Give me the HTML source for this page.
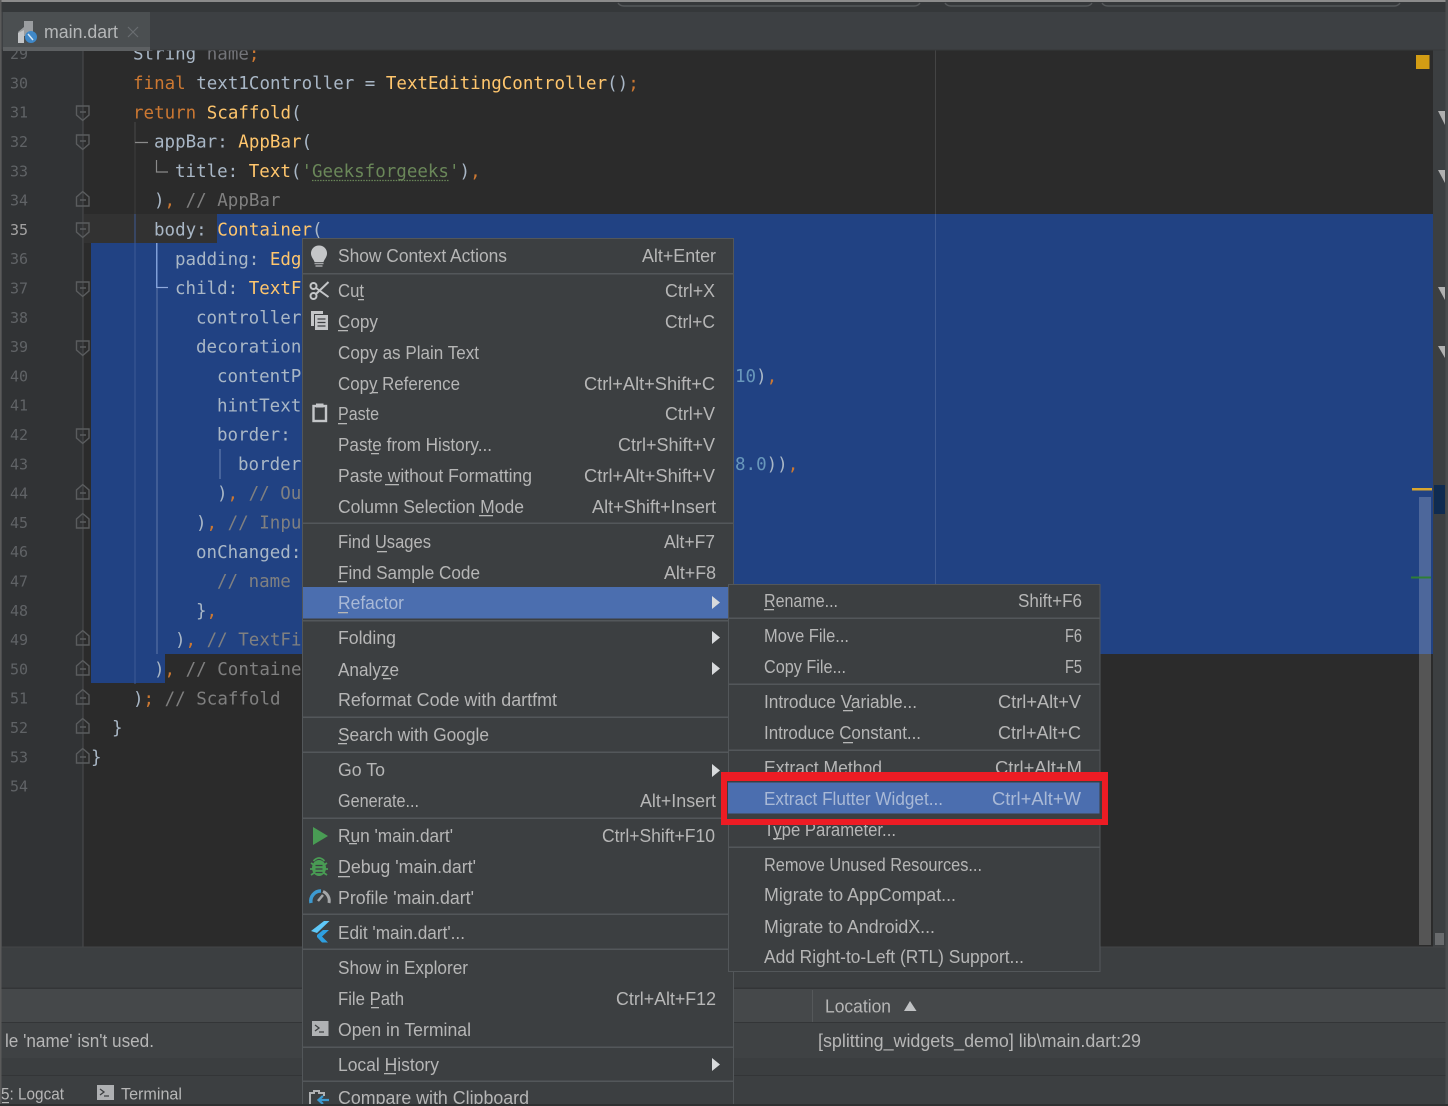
<!DOCTYPE html>
<html lang="en"><head><meta charset="utf-8"><title>main.dart</title>
<style>
html,body{margin:0;padding:0;background:#3c3f41;width:1448px;height:1106px;overflow:hidden}
svg{display:block;filter:blur(.35px)}
text{white-space:pre}
.c{font-family:"DejaVu Sans Mono","Liberation Mono",monospace;font-size:17.5px;fill:#a9b7c6}
.n{font-family:"DejaVu Sans Mono","Liberation Mono",monospace;font-size:15px;fill:#606366}
.m{font-family:"Liberation Sans",sans-serif;font-size:18px;fill:#b6b6b6}
.h{fill:#a9b9d6}
.k{fill:#cc7832}.y{fill:#ffc66d}.s{fill:#6a8759}.g{fill:#808080}.b{fill:#6897bb}.d{fill:#74757a}
.f{fill:none;stroke:#5a5c5e;stroke-width:1.4}
.u{fill:#b6b6b6}
.a{fill:#c4c6c8}
</style></head><body>
<svg width="1448" height="1106" viewBox="0 0 1448 1106" xmlns="http://www.w3.org/2000/svg">
<!-- editor background -->
<rect x="0" y="0" width="1448" height="1106" fill="#3c3f41"/>
<rect x="2" y="50" width="81" height="897" fill="#313335"/>
<rect x="83" y="50" width="1350" height="897" fill="#2b2b2b"/>
<rect x="1433" y="50" width="13" height="897" fill="#3c3f41"/>
<!-- current line + selection -->
<rect x="84" y="214" width="133" height="29" fill="#323232"/>
<rect x="217" y="214" width="1216" height="29.5" fill="#214283"/>
<rect x="91" y="243" width="1342" height="411" fill="#214283"/>
<rect x="91" y="654" width="74" height="29" fill="#214283"/>
<!-- gutter line + margin -->
<rect x="82.5" y="50" width="1" height="897" fill="#4c4e50"/>
<rect x="935" y="50" width="1" height="164" fill="#444"/>
<rect x="935" y="214" width="1" height="440" fill="#3d5a94"/>
<rect x="935" y="654" width="1" height="293" fill="#444"/>
<!-- indent guides -->
<rect x="134.5" y="122" width="1" height="21" fill="#4a4a4a"/>
<rect x="134.5" y="143" width="1" height="71" fill="#3e3e3e"/>
<rect x="134.5" y="214" width="1" height="470" fill="#3d5a94"/>
<path d="M135 142.500H148M156.500 160V172H168" fill="none" stroke="#8a8a8a" stroke-width="1.200"/>
<rect x="156" y="243" width="1.500" height="45" fill="#7f9fd8"/>
<path d="M157 287.500H168" fill="none" stroke="#8fa9dc" stroke-width="1.200"/>
<rect x="156.500" y="288" width="1" height="366" fill="#5f78a8"/>
<rect x="219.500" y="449" width="1" height="30" fill="#6d86b6"/>
<!-- line numbers -->
<g transform="translate(0 -.6)">
<text class="n" x="10" y="59.700">29</text><text class="n" x="10" y="89">30</text><text class="n" x="10" y="118.300">31</text><text class="n" x="10" y="147.600">32</text><text class="n" x="10" y="176.900">33</text><text class="n" x="10" y="206.200">34</text><text class="n" x="10" y="235.500" style="fill:#a4a3a3">35</text><text class="n" x="10" y="264.800">36</text><text class="n" x="10" y="294.100">37</text><text class="n" x="10" y="323.400">38</text><text class="n" x="10" y="352.700">39</text><text class="n" x="10" y="382">40</text><text class="n" x="10" y="411.300">41</text><text class="n" x="10" y="440.600">42</text><text class="n" x="10" y="469.900">43</text><text class="n" x="10" y="499.200">44</text><text class="n" x="10" y="528.500">45</text><text class="n" x="10" y="557.800">46</text><text class="n" x="10" y="587.100">47</text><text class="n" x="10" y="616.400">48</text><text class="n" x="10" y="645.700">49</text><text class="n" x="10" y="675">50</text><text class="n" x="10" y="704.300">51</text><text class="n" x="10" y="733.600">52</text><text class="n" x="10" y="762.900">53</text><text class="n" x="10" y="792.200">54</text>
</g>
<!-- fold markers -->
<g class="f">
<path d="M76.500 106H89V115L82.750 120.500L76.500 115ZM80 112H86"/>
<path d="M76.500 135H89V144L82.750 149.500L76.500 144ZM80 141H86"/>
<path d="M76.500 223H89V232L82.750 237.500L76.500 232ZM80 229H86"/>
<path d="M76.500 282H89V291L82.750 296.500L76.500 291ZM80 288H86"/>
<path d="M76.500 341H89V350L82.750 355.500L76.500 350ZM80 347H86"/>
<path d="M76.500 429H89V438L82.750 443.500L76.500 438ZM80 435H86"/>
<path d="M76.500 206H89V197L82.750 191.500L76.500 197ZM80 200H86"/>
<path d="M76.500 499H89V490L82.750 484.500L76.500 490ZM80 493H86"/>
<path d="M76.500 528H89V519L82.750 513.500L76.500 519ZM80 522H86"/>
<path d="M76.500 645H89V636L82.750 630.500L76.500 636ZM80 639H86"/>
<path d="M76.500 675H89V666L82.750 660.500L76.500 666ZM80 669H86"/>
<path d="M76.500 704H89V695L82.750 689.500L76.500 695ZM80 698H86"/>
<path d="M76.500 733H89V724L82.750 718.500L76.500 724ZM80 727H86"/>
<path d="M76.500 763H89V754L82.750 748.500L76.500 754ZM80 757H86"/>
</g>
<!-- code -->
<text class="c" x="133" y="59.700">String <tspan class="d">name</tspan><tspan class="k">;</tspan></text>
<text class="c" x="133" y="89"><tspan class="k">final</tspan> text1Controller = <tspan class="y">TextEditingController</tspan>()<tspan class="k">;</tspan></text>
<text class="c" x="133" y="118.300"><tspan class="k">return</tspan> <tspan class="y">Scaffold</tspan>(</text>
<text class="c" x="154" y="147.600">appBar: <tspan class="y">AppBar</tspan>(</text>
<text class="c" x="175" y="176.900">title: <tspan class="y">Text</tspan>(<tspan class="s">'Geeksforgeeks'</tspan>)<tspan class="k">,</tspan></text>
<path d="M312 180.500H449" stroke="#6a8759" stroke-width="1.300" stroke-dasharray="1.500 1.200"/>
<text class="c" x="154" y="206.200">)<tspan class="k">,</tspan> <tspan class="g">// AppBar</tspan></text>
<text class="c" x="154" y="235.500">body: <tspan class="y">Container</tspan>(</text>
<text class="c" x="175" y="264.800">padding: <tspan class="y">Edg</tspan></text>
<text class="c" x="175" y="294.100">child: <tspan class="y">TextF</tspan></text>
<text class="c" x="196" y="323.400">controller</text>
<text class="c" x="196" y="352.700">decoration</text>
<text class="c" x="217" y="382">contentP</text>
<text class="c" x="217" y="411.300">hintText</text>
<text class="c" x="217" y="440.600">border:</text>
<text class="c" x="238" y="469.900">border</text>
<text class="c" x="217" y="499.200">)<tspan class="k">,</tspan> <tspan class="g">// Ou</tspan></text>
<text class="c" x="196" y="528.500">)<tspan class="k">,</tspan> <tspan class="g">// Inpu</tspan></text>
<text class="c" x="196" y="557.800">onChanged:</text>
<text class="c g" x="217" y="587.100">// name</text>
<text class="c" x="196" y="616.400">}<tspan class="k">,</tspan></text>
<text class="c" x="175" y="645.700">)<tspan class="k">,</tspan> <tspan class="g">// TextFi</tspan></text>
<text class="c" x="154" y="675">)<tspan class="k">,</tspan> <tspan class="g">// Containe</tspan></text>
<text class="c" x="133" y="704.300">)<tspan class="k">;</tspan> <tspan class="g">// Scaffold</tspan></text>
<text class="c" x="112" y="733.600">}</text>
<text class="c" x="91" y="762.900">}</text>
<text class="c" x="735" y="382"><tspan class="b">10</tspan>)<tspan class="k">,</tspan></text>
<text class="c" x="735" y="469.900"><tspan class="b">8.0</tspan>))<tspan class="k">,</tspan></text>
<!-- right markers -->
<rect x="1416" y="55" width="13.500" height="14" fill="#d39d14"/>
<path d="M1438 111H1445V125ZM1438 170H1445V183ZM1438 287H1445V300ZM1438 346H1445V358Z" fill="#b0b0b0"/>
<rect x="1419" y="497" width="12" height="448" fill="#fff" fill-opacity=".2"/>
<rect x="1412" y="488" width="20" height="2.500" fill="#d9a62e"/>
<rect x="1411" y="576.500" width="20" height="2" fill="#2f7f34"/>
<rect x="1434" y="485" width="11" height="29" fill="#0f2b50"/>
<rect x="1435" y="933" width="9" height="12" fill="#696b6d"/>
<!-- top bars -->
<rect x="0" y="0" width="1448" height="12" fill="#35383a"/>
<rect x="0" y="0" width="1448" height="2" fill="#8b8b8b"/>
<path d="M618 3Q620 6 624 6H914Q918 6 920 3M945 3Q947 6 951 6H1086Q1090 6 1092 3M1102 3Q1104 6 1108 6H1394Q1398 6 1400 3" fill="none" stroke="#55585a" stroke-width="1.500"/>
<rect x="0" y="12" width="1448" height="38" fill="#3d4043"/>
<rect x="0" y="49.500" width="1448" height="1" fill="#36383a"/>
<rect x="3" y="12" width="147" height="39" fill="#4b4f51"/>
<rect x="3" y="47" width="147" height="4" fill="#5d6062"/>
<path d="M18 32L24 27V21H33V36H20Z" fill="#9a9da0"/>
<path d="M18 43V33L24 30V43Z" fill="#c2c4c6"/>
<circle cx="31" cy="37" r="6" fill="#3f88c8"/>
<path d="M28 34L33 40" stroke="#d5e6f5" stroke-width="1.500"/>
<text class="m" x="44" y="38" textLength="74" lengthAdjust="spacingAndGlyphs" style="fill:#b5b7b8">main.dart</text>
<path d="M128 27L138 37M138 27L128 37" stroke="#6a6d70" stroke-width="1.200"/>
<!-- bottom panels -->
<rect x="0" y="947" width="1448" height="41" fill="#3c3f41"/>
<rect x="0" y="946.500" width="1448" height="1" fill="#434547"/>
<rect x="0" y="987.500" width="1448" height="1.500" fill="#333537"/>
<rect x="0" y="989" width="1448" height="33" fill="#45484a"/>
<rect x="0" y="1022" width="1448" height="1" fill="#333537"/>
<rect x="0" y="1023" width="1448" height="35" fill="#3f4244"/>
<rect x="0" y="1058" width="1448" height="17" fill="#3b3e40"/>
<rect x="0" y="1075" width="1448" height="1" fill="#333537"/>
<rect x="0" y="1076" width="1448" height="28" fill="#3c3f41"/>
<rect x="812" y="990" width="1" height="32" fill="#55585a"/>
<text class="m" x="825" y="1012.500" textLength="66" lengthAdjust="spacingAndGlyphs">Location</text>
<path d="M904 1011L910 1001L916.500 1011Z" fill="#c0c2c4"/>
<text class="m" x="818" y="1047" textLength="323" lengthAdjust="spacingAndGlyphs">[splitting_widgets_demo] lib\main.dart:29</text>
<text class="m" x="5" y="1047" textLength="149" lengthAdjust="spacingAndGlyphs">le 'name' isn't used.</text>
<text class="m" x="1" y="1099.500" textLength="63" lengthAdjust="spacingAndGlyphs" style="font-size:17px">5: Logcat</text>
<rect x="2" y="1102" width="7" height="1.200" fill="#b6b6b6"/>
<rect x="97" y="1085" width="17" height="15" fill="#aeb0b2"/>
<path d="M100 1089L104 1092L100 1095M104 1096H109" fill="none" stroke="#3c3f41" stroke-width="1.300"/>
<text class="m" x="121" y="1099.500" textLength="61" lengthAdjust="spacingAndGlyphs" style="font-size:17px">Terminal</text>
<!-- main menu -->
<rect x="302.500" y="238.500" width="431" height="870" fill="#3c3f41" stroke="#53575a"/>
<g fill="#53575a">
<rect x="303" y="273" width="430" height="1.500"/><rect x="303" y="522.500" width="430" height="1.500"/><rect x="303" y="620" width="430" height="1.500"/><rect x="303" y="716.500" width="430" height="1.500"/><rect x="303" y="751.500" width="430" height="1.500"/><rect x="303" y="817.500" width="430" height="1.500"/><rect x="303" y="913.500" width="430" height="1.500"/><rect x="303" y="948.500" width="430" height="1.500"/><rect x="303" y="1046.500" width="430" height="1.500"/><rect x="303" y="1080.500" width="430" height="1.500"/>
</g>
<rect x="303" y="587" width="425" height="31.500" fill="#4b6eaf"/>
<g>
<text class="m" x="338" y="262" textLength="169" lengthAdjust="spacingAndGlyphs">Show Context Actions</text><text class="m" x="642" y="262" textLength="74" lengthAdjust="spacingAndGlyphs">Alt+Enter</text>
<text class="m" x="338" y="297" textLength="26" lengthAdjust="spacingAndGlyphs">Cut</text><text class="m" x="665" y="297" textLength="50" lengthAdjust="spacingAndGlyphs">Ctrl+X</text>
<text class="m" x="338" y="328" textLength="40" lengthAdjust="spacingAndGlyphs">Copy</text><text class="m" x="665" y="328" textLength="50" lengthAdjust="spacingAndGlyphs">Ctrl+C</text>
<text class="m" x="338" y="359" textLength="141" lengthAdjust="spacingAndGlyphs">Copy as Plain Text</text>
<text class="m" x="338" y="390" textLength="122" lengthAdjust="spacingAndGlyphs">Copy Reference</text><text class="m" x="584" y="390" textLength="131" lengthAdjust="spacingAndGlyphs">Ctrl+Alt+Shift+C</text>
<text class="m" x="338" y="420" textLength="41" lengthAdjust="spacingAndGlyphs">Paste</text><text class="m" x="665" y="420" textLength="50" lengthAdjust="spacingAndGlyphs">Ctrl+V</text>
<text class="m" x="338" y="451" textLength="154" lengthAdjust="spacingAndGlyphs">Paste from History...</text><text class="m" x="618" y="451" textLength="97" lengthAdjust="spacingAndGlyphs">Ctrl+Shift+V</text>
<text class="m" x="338" y="482" textLength="194" lengthAdjust="spacingAndGlyphs">Paste without Formatting</text><text class="m" x="584" y="482" textLength="131" lengthAdjust="spacingAndGlyphs">Ctrl+Alt+Shift+V</text>
<text class="m" x="338" y="513" textLength="186" lengthAdjust="spacingAndGlyphs">Column Selection Mode</text><text class="m" x="592" y="513" textLength="124" lengthAdjust="spacingAndGlyphs">Alt+Shift+Insert</text>
<text class="m" x="338" y="548" textLength="93" lengthAdjust="spacingAndGlyphs">Find Usages</text><text class="m" x="664" y="548" textLength="51" lengthAdjust="spacingAndGlyphs">Alt+F7</text>
<text class="m" x="338" y="579" textLength="142" lengthAdjust="spacingAndGlyphs">Find Sample Code</text><text class="m" x="664" y="579" textLength="52" lengthAdjust="spacingAndGlyphs">Alt+F8</text>
<text class="m h" x="338" y="609" textLength="66" lengthAdjust="spacingAndGlyphs">Refactor</text>
<text class="m" x="338" y="644" textLength="58" lengthAdjust="spacingAndGlyphs">Folding</text>
<text class="m" x="338" y="676" textLength="61" lengthAdjust="spacingAndGlyphs">Analyze</text>
<text class="m" x="338" y="706" textLength="219" lengthAdjust="spacingAndGlyphs">Reformat Code with dartfmt</text>
<text class="m" x="338" y="741" textLength="151" lengthAdjust="spacingAndGlyphs">Search with Google</text>
<text class="m" x="338" y="776" textLength="47" lengthAdjust="spacingAndGlyphs">Go To</text>
<text class="m" x="338" y="807" textLength="81" lengthAdjust="spacingAndGlyphs">Generate...</text><text class="m" x="640" y="807" textLength="76" lengthAdjust="spacingAndGlyphs">Alt+Insert</text>
<text class="m" x="338" y="842" textLength="115" lengthAdjust="spacingAndGlyphs">Run 'main.dart'</text><text class="m" x="602" y="842" textLength="113" lengthAdjust="spacingAndGlyphs">Ctrl+Shift+F10</text>
<text class="m" x="338" y="873" textLength="138" lengthAdjust="spacingAndGlyphs">Debug 'main.dart'</text>
<text class="m" x="338" y="904" textLength="136" lengthAdjust="spacingAndGlyphs">Profile 'main.dart'</text>
<text class="m" x="338" y="939" textLength="127" lengthAdjust="spacingAndGlyphs">Edit 'main.dart'...</text>
<text class="m" x="338" y="974" textLength="130" lengthAdjust="spacingAndGlyphs">Show in Explorer</text>
<text class="m" x="338" y="1005" textLength="66" lengthAdjust="spacingAndGlyphs">File Path</text><text class="m" x="616" y="1005" textLength="100" lengthAdjust="spacingAndGlyphs">Ctrl+Alt+F12</text>
<text class="m" x="338" y="1036" textLength="133" lengthAdjust="spacingAndGlyphs">Open in Terminal</text>
<text class="m" x="338" y="1071" textLength="101" lengthAdjust="spacingAndGlyphs">Local History</text>
<text class="m" x="338" y="1104" textLength="191" lengthAdjust="spacingAndGlyphs">Compare with Clipboard</text>
</g>
<!-- mnemonic underlines -->
<g class="u">
<rect x="358" y="299" width="6" height="1.300"/><rect x="338" y="330" width="10" height="1.300"/><rect x="372" y="392" width="6" height="1.300"/><rect x="338" y="423" width="9" height="1.300"/><rect x="371" y="453" width="8" height="1.300"/><rect x="385" y="484" width="14" height="1.300"/><rect x="479" y="515" width="14" height="1.300"/><rect x="377" y="551" width="10" height="1.300"/><rect x="338" y="581" width="9" height="1.300"/><rect x="338" y="612" width="10" height="1.300"/><rect x="383" y="678" width="8" height="1.300"/><rect x="338" y="743" width="9" height="1.300"/><rect x="349" y="843" width="8" height="1.300"/><rect x="338" y="876" width="12" height="1.300"/><rect x="371" y="1007" width="8" height="1.300"/><rect x="384" y="1073" width="12" height="1.300"/>
</g>
<!-- arrows -->
<g fill="#d8dadc">
<path d="M712 596L720 602.500L712 609Z"/><path d="M712 631L720 637.500L712 644Z"/><path d="M712 662L720 668.500L712 675Z"/><path d="M712 764L720 770.500L712 777Z"/><path d="M712 1058L720 1064.500L712 1071Z"/>
</g>
<!-- menu icons -->
<path class="a" d="M319 245.500A7.800 7.800 0 0 1 327 253.500C327 257 324.500 259 323.500 262H314.500C313.500 259 311 257 311 253.500A7.800 7.800 0 0 1 319 245.500Z"/>
<path d="M314.500 263.500H323.500M315.500 266H322.500" stroke="#a5a7a9" stroke-width="1.600"/>
<g fill="none" stroke="#c4c6c8" stroke-width="2">
<circle cx="313.500" cy="286" r="3"/><circle cx="313.500" cy="296" r="3"/>
<path d="M316 288L328.500 297M316 294L328.500 282"/>
</g>
<path class="a" d="M311 311H323V314H314V326H311Z"/>
<rect x="315" y="315" width="13" height="15" fill="#c4c6c8"/>
<path d="M317.500 319H325.500M317.500 322.500H325.500M317.500 326H325.500" stroke="#3c3f41" stroke-width="1.300"/>
<rect x="313.500" y="406" width="12.500" height="15" fill="none" stroke="#c4c6c8" stroke-width="2.400"/>
<rect x="316" y="403.500" width="7.500" height="4" fill="#c4c6c8"/>
<path d="M313 827L328 836L313 845Z" fill="#499c54"/>
<path d="M313.500 861Q319 855 324.500 861M311 863L314 865M327 863L324 865M310 869H314M328 869H324M311 875L314 873M327 875L324 873" fill="none" stroke="#499c54" stroke-width="1.800"/>
<ellipse cx="319" cy="868" rx="7" ry="8" fill="#499c54"/>
<path d="M315.500 865.500H322.500M315.500 869H322.500M315.500 872.500H322.500" stroke="#3c3f41" stroke-width="1.300"/>
<path d="M311 903A10 10 0 0 1 321 891" fill="none" stroke="#3d9ad0" stroke-width="3.500"/>
<path d="M323 891.500A10 10 0 0 1 329 903" fill="none" stroke="#a5a7a9" stroke-width="3"/>
<path d="M318 901L323 895" stroke="#a5a7a9" stroke-width="2.500"/>
<path d="M311 931L324 921H329.500L317 933Z" fill="#5fc8f8"/>
<path d="M317 935L323 930H329L322 936.500L328 942.500H322L317 937Z" fill="#2e9fe0"/>
<rect x="312" y="1021" width="16.500" height="15" fill="#b0b2b4"/>
<path d="M315 1025L319 1028L315 1031M319 1032H324" fill="none" stroke="#3c3f41" stroke-width="1.300"/>
<path d="M310 1104V1093H314V1091H319V1093H324V1096" fill="none" stroke="#b0b2b4" stroke-width="2"/>
<path d="M329 1100H319M323 1096L318.500 1100L323 1104" fill="none" stroke="#3d9ad0" stroke-width="2.200"/>
<!-- submenu -->
<rect x="728.500" y="584.500" width="371.500" height="387" fill="#3c3f41" stroke="#53575a"/>
<g fill="#53575a">
<rect x="729" y="617.500" width="371" height="1.500"/><rect x="729" y="683.500" width="371" height="1.500"/><rect x="729" y="749.500" width="371" height="1.500"/><rect x="729" y="846.500" width="371" height="1.500"/>
</g>
<text class="m" x="764" y="607" textLength="74" lengthAdjust="spacingAndGlyphs">Rename...</text><text class="m" x="1018" y="607" textLength="64" lengthAdjust="spacingAndGlyphs">Shift+F6</text>
<text class="m" x="764" y="642" textLength="85" lengthAdjust="spacingAndGlyphs">Move File...</text><text class="m" x="1065" y="642" textLength="17" lengthAdjust="spacingAndGlyphs">F6</text>
<text class="m" x="764" y="673" textLength="82" lengthAdjust="spacingAndGlyphs">Copy File...</text><text class="m" x="1065" y="673" textLength="17" lengthAdjust="spacingAndGlyphs">F5</text>
<text class="m" x="764" y="708" textLength="153" lengthAdjust="spacingAndGlyphs">Introduce Variable...</text><text class="m" x="998" y="708" textLength="83" lengthAdjust="spacingAndGlyphs">Ctrl+Alt+V</text>
<text class="m" x="764" y="739" textLength="157" lengthAdjust="spacingAndGlyphs">Introduce Constant...</text><text class="m" x="998" y="739" textLength="83" lengthAdjust="spacingAndGlyphs">Ctrl+Alt+C</text>
<text class="m" x="764" y="774" textLength="118" lengthAdjust="spacingAndGlyphs">Extract Method</text><text class="m" x="995" y="774" textLength="87" lengthAdjust="spacingAndGlyphs">Ctrl+Alt+M</text>
<text class="m" x="764" y="836" textLength="132" lengthAdjust="spacingAndGlyphs">Type Parameter...</text>
<text class="m" x="764" y="871" textLength="218" lengthAdjust="spacingAndGlyphs">Remove Unused Resources...</text>
<text class="m" x="764" y="901" textLength="192" lengthAdjust="spacingAndGlyphs">Migrate to AppCompat...</text>
<text class="m" x="764" y="933" textLength="171" lengthAdjust="spacingAndGlyphs">Migrate to AndroidX...</text>
<text class="m" x="764" y="963" textLength="260" lengthAdjust="spacingAndGlyphs">Add Right-to-Left (RTL) Support...</text>
<g class="u"><rect x="764" y="609" width="10" height="1.300"/><rect x="843" y="710" width="10" height="1.300"/><rect x="843" y="742" width="10" height="1.300"/><rect x="773" y="838" width="9" height="1.300"/></g>
<!-- red callout -->
<path fill-rule="evenodd" d="M721 772H1108V825H721ZM727 781V819H1102V781Z" fill="#ed1c24"/>
<rect x="727" y="781" width="375" height="38" fill="#3c3f41"/>
<rect x="728" y="782.500" width="371.500" height="31" fill="#4b6eaf"/>
<text class="m h" x="764" y="805" textLength="179" lengthAdjust="spacingAndGlyphs">Extract Flutter Widget...</text>
<text class="m h" x="992" y="805" textLength="89" lengthAdjust="spacingAndGlyphs">Ctrl+Alt+W</text>
<!-- frame -->
<rect x="0" y="0" width="1.500" height="1106" fill="#5a5a5a"/>
<rect x="1445.500" y="0" width="2.500" height="1106" fill="#4a4c4e"/>
<rect x="0" y="1104" width="1448" height="2" fill="#2f3031"/>
</svg>
</body></html>
